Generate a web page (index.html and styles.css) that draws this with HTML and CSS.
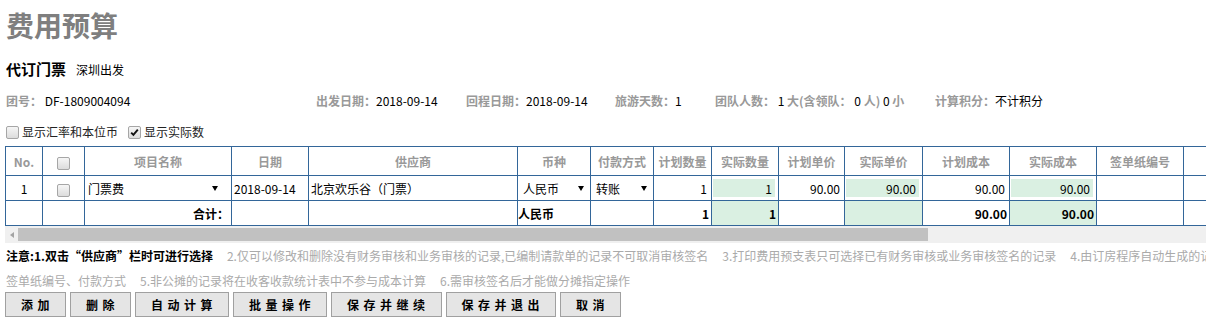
FILE: index.html
```html
<!DOCTYPE html>
<html lang="zh-CN">
<head>
  <meta charset="UTF-8" />
  <title>费用预算</title>
  <link rel="stylesheet" href="styles.css">
</head>
<body>
  <div class="page">
    <h1 class="title">费用预算</h1>

    <div class="sub"><b>代订门票</b><span>深圳出发</span></div>

    <div class="info">
      <div><span class="k">团号：</span> DF-1809004094</div>
      <div><span class="k">出发日期：</span>2018-09-14</div>
      <div><span class="k">回程日期：</span>2018-09-14</div>
      <div><span class="k">旅游天数：</span>1</div>
      <div><span class="k">团队人数：</span> 1 <span class="k">大(含领队：</span> 0 <span class="k">人)</span> 0 <span class="k">小</span></div>
      <div><span class="k">计算积分：</span>不计积分</div>
    </div>

    <div class="opts">
      <label><span class="cb"></span>显示汇率和本位币</label>
      <label><span class="cb"><svg viewBox="0 0 11 11" width="11" height="11"><path d="M2.2 5.6 L4.4 7.9 L8.8 2.6" fill="none" stroke="#111" stroke-width="1.9"/></svg></span>显示实际数</label>
    </div>

    <div class="grid-wrap">
      <table class="grid">
        <colgroup>
          <col style="width:37px"><col style="width:42px"><col style="width:147px"><col style="width:77px">
          <col style="width:209px"><col style="width:73px"><col style="width:63px"><col style="width:58px">
          <col style="width:67px"><col style="width:66px"><col style="width:78px"><col style="width:87px">
          <col style="width:87px"><col style="width:87px"><col style="width:87px">
        </colgroup>
        <thead>
          <tr>
            <th>No.</th>
            <th><span class="cb"></span></th>
            <th>项目名称</th>
            <th>日期</th>
            <th>供应商</th>
            <th>币种</th>
            <th>付款方式</th>
            <th>计划数量</th>
            <th>实际数量</th>
            <th>计划单价</th>
            <th>实际单价</th>
            <th>计划成本</th>
            <th>实际成本</th>
            <th>签单纸编号</th>
            <th></th>
          </tr>
        </thead>
        <tbody>
          <tr>
            <td class="c">1</td>
            <td class="c"><span class="cb"></span></td>
            <td><div class="sel sel-item"><span>门票费</span><i></i></div></td>
            <td>2018-09-14</td>
            <td>北京欢乐谷（门票）</td>
            <td class="p1"><div class="sel"><span>人民币</span><i></i></div></td>
            <td class="p1"><div class="sel"><span>转账</span><i></i></div></td>
            <td class="p1"><input class="num" value="1"></td>
            <td class="p1"><input class="num act" value="1"></td>
            <td class="p1"><input class="num" value="90.00"></td>
            <td class="p1"><input class="num act" value="90.00"></td>
            <td class="p1"><input class="num" value="90.00"></td>
            <td class="p1"><input class="num act" value="90.00"></td>
            <td></td>
            <td></td>
          </tr>
          <tr class="sum">
            <td></td>
            <td></td>
            <td class="r">合计：</td>
            <td></td>
            <td></td>
            <td class="cur">人民币</td>
            <td></td>
            <td class="r">1</td>
            <td class="r act">1</td>
            <td></td>
            <td class="act"></td>
            <td class="r">90.00</td>
            <td class="r act">90.00</td>
            <td></td>
            <td></td>
          </tr>
        </tbody>
      </table>
    </div>

    <div class="hbar"><span class="arr"><i></i></span><span class="thumb"></span></div>

    <div class="notes">
      <div><b>注意:1.双击“供应商”栏时可进行选择</b><span class="n">2.仅可以修改和删除没有财务审核和业务审核的记录,已编制请款单的记录不可取消审核签名</span><span class="n">3.打印费用预支表只可选择已有财务审核或业务审核签名的记录</span><span class="n">4.由订房程序自动生成的记录只能修改</span></div>
      <div>签单纸编号、付款方式<span class="n">5.非公摊的记录将在收客收款统计表中不参与成本计算</span><span class="n">6.需审核签名后才能做分摊指定操作</span></div>
    </div>

    <div class="btns">
      <button class="btn">添加</button>
      <button class="btn">删除</button>
      <button class="btn">自动计算</button>
      <button class="btn">批量操作</button>
      <button class="btn">保存并继续</button>
      <button class="btn">保存并退出</button>
      <button class="btn">取消</button>
    </div>
  </div>
</body>
</html>
```

FILE: styles.css
```css
html, body { overflow: hidden; }
body { margin: 0; padding: 0; background: #fff; color: #000; font-family: "Noto Sans CJK SC", sans-serif; font-size: 12px; }
.page { width: 1300px; padding-left: 5px; }

.title { margin: 0; padding: 7px 0 0 1px; font-size: 28px; line-height: 36px; font-weight: bold; color: #7f7f7f; }

.sub { margin-top: 16px; padding-left: 1px; line-height: 20px; }
.sub b { font-size: 15px; }
.sub span { margin-left: 10px; }

.info { margin-top: 11px; padding-left: 1px; line-height: 20px; display: grid; grid-template-columns: 310px 150px 149px 100px 220px auto; }
.info .k { color: #999; font-weight: bold; }

.opts { margin-top: 11px; padding-left: 1px; line-height: 20px; display: flex; align-items: center; }
.opts label { display: flex; align-items: center; margin-right: 10px; color: #222; }

.cb { display: inline-flex; align-items: center; justify-content: center; width: 13px; height: 13px; box-sizing: border-box; border: 1px solid #a6a6a6; border-radius: 2px; background: linear-gradient(#f6f6f6, #dcdcdc); margin-right: 3px; vertical-align: middle; }
.grid .cb { margin: 0; }

.grid-wrap { margin-top: 4px; width: 1295px; overflow: hidden; }
.grid { border-collapse: collapse; table-layout: fixed; width: 1266px; }
.grid th, .grid td { border: 1px solid #336699; padding: 0 2px; height: 24px; white-space: nowrap; overflow: hidden; }
.grid th { height: 28px; color: #999; font-weight: bold; text-align: center; }
.grid td.c { text-align: center; }
.grid td.r { text-align: right; }
.grid td.p1 { padding: 0 1px; }
.grid .act { background: #daf0e2; }
.sum td { font-weight: bold; }
.sum td.cur { padding-left: 0; }

.sel { display: flex; align-items: center; justify-content: space-between; padding: 0 5px 0 4px; }
.sel-item { width: 137px; box-sizing: border-box; margin-left: -1px; padding-left: 2px; }
.sel i { width: 0; height: 0; border-left: 3px solid transparent; border-right: 3px solid transparent; border-top: 5px solid #000; }

.grid input.num { display: block; width: 100%; height: 18px; box-sizing: border-box; border: 0; padding: 0 3px 0 0; margin: 0; font: inherit; color: #000; text-align: right; background: transparent; }
.grid input.num.act { width: calc(100% - 2px); background: #daf0e2; }

.hbar { width: 1295px; height: 17px; background: #f0f0f0; display: flex; align-items: center; }
.hbar .arr { width: 13px; display: flex; justify-content: center; }
.hbar .arr i { width: 0; height: 0; border-top: 3.5px solid transparent; border-bottom: 3.5px solid transparent; border-right: 4px solid #a3a3a3; }
.hbar .thumb { width: 910px; height: 13px; background: #c1c1c1; }

.notes { padding-left: 1px; line-height: 25px; color: #aaa; white-space: nowrap; }
.notes b { color: #000; }
.notes .n { margin-left: 14px; }

.btns { display: flex; gap: 4px; margin-top: -1px; }
.btn { height: 25px; box-sizing: border-box; border: 1px solid #a0a0a0; background: #e5e5e5; padding: 0 11px 0 15px; font-family: "Noto Sans CJK SC", sans-serif; font-size: 12px; font-weight: bold; letter-spacing: 4.5px; line-height: 23px; color: #000; }
```
